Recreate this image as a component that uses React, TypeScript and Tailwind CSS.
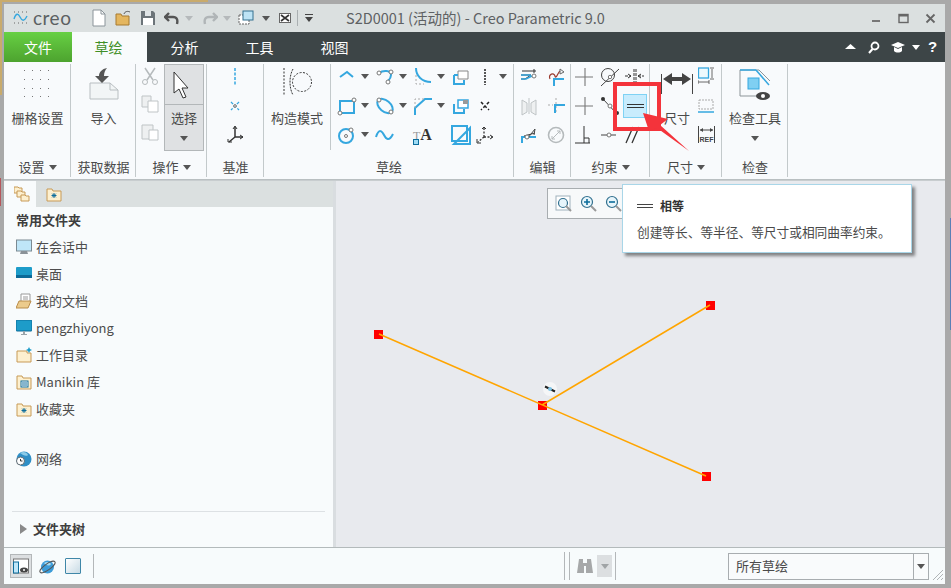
import { ReactNode } from "react";

const cjk = "font-['Microsoft_YaHei','Noto_Sans_CJK_SC','Noto_Sans',sans-serif]";
const BLUE = "#35a7df";

function Svg({ w = 20, h = 20, children }: { w?: number; h?: number; children: ReactNode }) {
  return (
    <svg width={w} height={h} viewBox={`0 0 ${w} ${h}`} fill="none" className="block shrink-0">
      {children}
    </svg>
  );
}

function DropArrow({ color = "#555" }: { color?: string }) {
  return (
    <svg width="8" height="5" viewBox="0 0 8 5" className="block shrink-0">
      <path d="M0 0h8L4 5z" fill={color} />
    </svg>
  );
}

function Dot({ x, y, fill = "#fff", r = 2 }: { x: number; y: number; fill?: string; r?: number }) {
  return <circle cx={x} cy={y} r={r} fill={fill} stroke="#777" strokeWidth="1" />;
}

function FolderIcon({ star }: { star?: boolean }) {
  return (
    <Svg w={16} h={16}>
      <path d="M1 3h5l1 2h8v10H1z" fill="#fdf0cf" stroke="#c79a56" />
      {star && <path d="M8 7v5M5.500 9.500h5M6.200 7.700l3.600 3.600M9.800 7.700l-3.600 3.600" stroke="#0d6d9c" strokeWidth="1" />}
    </Svg>
  );
}

function Group({ label, arrow, className, children }: { label: string; arrow?: boolean; className: string; children: ReactNode }) {
  return (
    <div className={`relative flex flex-col after:absolute after:right-0 after:top-[2px] after:bottom-[2px] after:w-px after:bg-[#c3c9cb] ${className}`}>
      <div className="h-[95px] flex">{children}</div>
      <div className="h-5 flex items-center justify-center gap-1 text-[13px] text-[#4a4a4a]">
        {label}
        {arrow && <DropArrow />}
      </div>
    </div>
  );
}

function SketchCell({ icon, arrow }: { icon: ReactNode; arrow?: boolean }) {
  return (
    <div className="flex items-center gap-1 pl-px">
      {icon}
      {arrow && <DropArrow />}
    </div>
  );
}

const sketchIcons: { icon: ReactNode; arrow?: boolean }[] = [
  { icon: <Svg><path d="M3 10l7-5 6 5" stroke={BLUE} strokeWidth="2" /></Svg>, arrow: true },
  { icon: <Svg><path d="M4 6c4-3 12-3 12 2 0 3-2 5-3 6" stroke={BLUE} strokeWidth="2" /><Dot x={4} y={6} /><Dot x={16} y={5} /><Dot x={13} y={15} /></Svg>, arrow: true },
  { icon: <Svg><path d="M3 1c0 8 6 14 15 14" stroke={BLUE} strokeWidth="2" /><path d="M3 8v9h8" stroke="#aaa" strokeDasharray="2 2" /></Svg>, arrow: true },
  { icon: <Svg><path d="M3 8v9h10v-4" stroke={BLUE} strokeWidth="2" /><path d="M7 12V4h10v8H7z" stroke="#888" fill="#fff" /><path d="M3 8h4" stroke={BLUE} strokeWidth="2" /></Svg> },
  { icon: <Svg><path d="M10 2v16" stroke="#222" strokeDasharray="2 1" strokeWidth="1.500" /></Svg>, arrow: true },
  { icon: <Svg><rect x="3" y="5" width="14" height="12" stroke={BLUE} strokeWidth="2" /><Dot x={17} y={4} /><Dot x={3} y={17} /></Svg>, arrow: true },
  { icon: <Svg><ellipse cx="10" cy="10" rx="9" ry="5.500" transform="rotate(40 10 10)" stroke={BLUE} strokeWidth="2" /><Dot x={4} y={4} /><Dot x={16} y={16} /></Svg>, arrow: true },
  { icon: <Svg><path d="M2 19v-7l10-9h7" stroke={BLUE} strokeWidth="2" /><path d="M2 12V3h10" stroke="#aaa" strokeDasharray="2 2" /></Svg>, arrow: true },
  { icon: <Svg><path d="M3 8v9h10v-4" stroke={BLUE} strokeWidth="2" /><path d="M7 12V4h10v8H7z" stroke={BLUE} strokeWidth="1.500" fill="#fff" /><rect x="12" y="4" width="5" height="4" fill="#999" /></Svg> },
  { icon: <Svg><path d="M6 6l8 8M14 6l-8 8" stroke="#222" strokeDasharray="3 2" strokeWidth="1.500" /></Svg> },
  { icon: <Svg><circle cx="9" cy="11" r="7" stroke={BLUE} strokeWidth="2" /><Dot x={9} y={11} r={1.500} /><Dot x={14} y={5} /></Svg>, arrow: true },
  { icon: <Svg><path d="M1 12c3-9 6-6 8-2s5 7 9-1" stroke={BLUE} strokeWidth="2" /></Svg> },
  {
    icon: (
      <div className="relative w-5 h-5 font-['Liberation_Serif',serif] leading-5 text-[#333] whitespace-nowrap">
        <span className="text-[12px] text-[#999]">T</span>
        <span className="text-[16px] font-bold">A</span>
        <span className="absolute left-0 bottom-0 w-[6px] h-[6px] bg-[#9fdcf5] border border-[#0d6d9c]" />
      </div>
    ),
  },
  { icon: <Svg><rect x="1" y="1" width="15" height="15" stroke={BLUE} strokeWidth="2" /><path d="M19 3L3 19h16z" stroke={BLUE} strokeWidth="2" /></Svg> },
  { icon: <Svg><path d="M9 3v9M9 12l-6 5M9 12h8" stroke="#333" strokeDasharray="2 1.500" strokeWidth="1.300" /><path d="M7 4l2-2 2 2M2 14v4h4M15 10l3 2-3 2" stroke="#333" /></Svg> },
];

const sideRows: { label: string; icon: ReactNode }[] = [
  { label: "在会话中", icon: <Svg w={16} h={16}><rect x="0.500" y="1" width="15" height="11" fill="#bfe6f8" stroke="#7b8a92" /><path d="M4 15h8l-1-3H5z" fill="#8a9298" /></Svg> },
  { label: "桌面", icon: <Svg w={16} h={16}><rect x="0" y="1" width="16" height="11" rx="1" fill="#1d9cc9" /><rect x="0" y="9" width="16" height="3" fill="#0b6a98" /></Svg> },
  { label: "我的文档", icon: <Svg w={16} h={16}><path d="M5 1h9v9H5z" fill="#fff" stroke="#999" /><path d="M7 4h5M7 6h5" stroke="#999" /><path d="M3 8h12l-3 7H0z" fill="#eccb8c" stroke="#b98d4b" /></Svg> },
  { label: "pengzhiyong", icon: <Svg w={16} h={16}><rect x="0" y="0" width="16" height="11" rx="1" fill="#1d9cc9" stroke="#0b6a98" /><path d="M7 11h2v3h2v1H5v-1h2z" fill="#9aa4aa" /></Svg> },
  { label: "工作目录", icon: <Svg w={16} h={16}><path d="M1 4h10v2h4v9H1z" fill="#fdf0cf" stroke="#c79a56" /><path d="M13 0l1 2 2 1-2 1-1 2-1-2-2-1 2-1z" fill="#1d9cc9" /></Svg> },
  { label: "Manikin 库", icon: <Svg w={16} h={16}><path d="M1 2h5l1 2h8v11H1z" fill="#fdf0cf" stroke="#c79a56" /><rect x="5" y="7" width="7" height="6" fill="#fff" stroke="#0d6d9c" /><path d="M6 9h5M6 11h5" stroke="#0d6d9c" /></Svg> },
  { label: "收藏夹", icon: <FolderIcon star /> },
];

function Sidebar() {
  return (
    <aside className="w-[332px] shrink-0 flex flex-col border-r-[3px] border-[#d9dde0]">
      <div className="h-[26px] flex bg-[#dbe0e0] shrink-0">
        <div className="w-[32px] bg-[#f8fbfc] flex items-center justify-center pl-1">
          <Svg w={16} h={16}>
            <path d="M0 1h4l1 1h3v5H0z" fill="#fdf0cf" stroke="#c79a56" />
            <path d="M3 5h4l1 1h3v5H3z" fill="#fdf0cf" stroke="#c79a56" />
            <path d="M7 9h4l1 1h3v5H7z" fill="#fdf0cf" stroke="#c79a56" />
          </Svg>
        </div>
        <div className="w-[32px] flex items-center justify-center pl-1">
          <FolderIcon star />
        </div>
      </div>
      <div className="flex-1 flex flex-col bg-[#f8fbfc] pt-px">
        <div className="h-6 pl-3 flex items-center text-[13px] font-bold text-[#3e3e3e]">常用文件夹</div>
        <div className="mt-px">
          {sideRows.map((r) => (
            <div key={r.label} className="h-[27px] pl-3 flex items-center gap-1 text-[13px] text-[#4d4d4d]">
              {r.icon}
              <span>{r.label}</span>
            </div>
          ))}
        </div>
        <div className="mt-[23px] h-[27px] pl-3 flex items-center gap-1 text-[13px] text-[#4d4d4d]">
          <Svg w={16} h={16}>
            <circle cx="8" cy="8" r="7.500" fill="#2f8fc6" />
            <path d="M4 2c3-2 7-1 8 2-2 2-5 0-8-2z" fill="#8ccbe8" />
            <circle cx="4.500" cy="10" r="4" fill="#fff" stroke="#5c6a72" />
            <path d="M4.500 8v2h2" stroke="#333" />
          </Svg>
          <span>网络</span>
        </div>
        <div className="flex-1" />
        <div className="mx-2 border-t border-[#dde1e4] h-[36px] pb-px flex items-center pl-2 gap-[6px] text-[13px] font-bold text-[#3e3e3e]">
          <svg width="7" height="10" viewBox="0 0 7 10"><path d="M0 0l7 5-7 5z" fill="#8a8a8a" /></svg>
          文件夹树
        </div>
      </div>
    </aside>
  );
}

function Canvas() {
  return (
    <main className="relative flex-1 bg-[#e8eaee]">
      <svg width="609" height="366" viewBox="336 181 609 366" className="absolute left-0 top-0">
        <rect x="374" y="330" width="9" height="9" fill="#f00" />
        <rect x="538" y="401" width="9" height="9" fill="#f00" />
        <rect x="706" y="301" width="9" height="9" fill="#f00" />
        <rect x="702" y="472" width="9" height="9" fill="#f00" />
        <path d="M379 334L706 476M710 305L542 405" stroke="#ffa500" strokeWidth="1.500" fill="none" />
        <circle cx="550" cy="389" r="7" fill="#f5f6f7" />
        <path d="M545 386.500l10 5" stroke="#222" strokeWidth="2" />
        <circle cx="550" cy="389" r="2" fill="#7fc4e6" />
      </svg>
      {/* in-graphics zoom bar */}
      <div className="absolute left-[211px] top-[7px] w-[90px] h-[31px] bg-[#f7f9fa] border border-[#a8adb0] flex items-center gap-[7px] pl-[7px]">
        <Svg w={18} h={18}>
          <rect x="1" y="1" width="14" height="14" fill="#fff" stroke="#9fb2bc" />
          <circle cx="8" cy="8" r="4.500" fill="#e7f5fb" stroke="#31708f" strokeWidth="1.200" />
          <path d="M11 11l5 5" stroke="#999" strokeWidth="2" />
        </Svg>
        <Svg w={18} h={18}>
          <circle cx="7" cy="7" r="5.500" fill="#e7f5fb" stroke="#31708f" strokeWidth="1.200" />
          <path d="M4 7h6M7 4v6" stroke="#0d6d9c" strokeWidth="1.600" />
          <path d="M11 11l5 5" stroke="#999" strokeWidth="2" />
        </Svg>
        <Svg w={18} h={18}>
          <circle cx="7" cy="7" r="5.500" fill="#e7f5fb" stroke="#31708f" strokeWidth="1.200" />
          <path d="M4 7h6" stroke="#0d6d9c" strokeWidth="1.600" />
          <path d="M11 11l5 5" stroke="#999" strokeWidth="2" />
        </Svg>
      </div>
    </main>
  );
}

export default function App() {
  return (
    <div className={`relative w-[951px] h-[588px] overflow-hidden bg-[#a9a9a9] pl-1 pt-1 pb-1 pr-[6px] ${cjk}`}>
      {/* desktop showing behind the window edge */}
      <div className="absolute left-0 top-0 w-[208px] h-[2px] bg-[#c9ab6c]" />
      <div className="absolute left-0 top-0 w-[2px] h-[95px] bg-[#c9ab6c]" />
      <div className="absolute left-0 top-[178px] w-px h-[28px] bg-[#b5575c]" />
      <div className="absolute right-0 top-[218px] w-px h-[112px] bg-[#5b7fb5]" />
      <div className="w-full h-full flex flex-col bg-[#f8fbfc]">
        {/* title bar */}
        <div className="h-[28px] shrink-0 bg-[#dbe0e0] flex items-center text-[#5c5f60]">
          <div className="flex items-center w-[87px] pl-[9px] gap-1">
            <Svg w={16} h={16}>
              <path d="M1 9c2-6 4-6 6-2s4 5 7-1" stroke={BLUE} strokeWidth="1.400" />
              <path d="M1 2h1M5 2h1M9 2h1M13 2h1M1 13h1M5 13h1M9 13h1M13 13h1" stroke="#666" />
            </Svg>
            <span className="font-['Lato','Noto_Sans',sans-serif] text-[19px] tracking-[0.5px] leading-none text-[#5c6163] -mt-[2px]">creo</span>
          </div>
          <div className="flex items-center">
            <Svg w={16} h={18}><path d="M2 1h8l4 4v12H2z" fill="#fff" stroke="#8b949a" /><path d="M10 1v4h4" stroke="#8b949a" /></Svg>
            <div className="ml-2">
              <Svg w={17} h={18}><path d="M1 5h5l1 2h7v9H1z" fill="#e4b65f" stroke="#a77a30" /><path d="M9 5c1-3 4-3 6-2" stroke="#555" /></Svg>
            </div>
            <div className="ml-2">
              <Svg w={16} h={16}><path d="M1 1h12l2 2v12H1z" fill="#6c7479" /><rect x="5" y="1" width="6" height="5" fill="#dfe4e6" /><rect x="3" y="8" width="10" height="7" fill="#fff" /></Svg>
            </div>
            <div className="ml-2 flex items-center gap-[5px]">
              <Svg w={16} h={14}><path d="M5 2L1 6l4 4M1 6h8c4 0 5 3 4 7" stroke="#555" strokeWidth="2.400" /></Svg>
              <DropArrow color="#b5b9bb" />
            </div>
            <div className="ml-[9px] flex items-center gap-[5px]">
              <Svg w={16} h={14}><path d="M11 2l4 4-4 4M15 6H7c-4 0-5 3-4 7" stroke="#b0b5b7" strokeWidth="2.400" /></Svg>
              <DropArrow color="#b5b9bb" />
            </div>
            <div className="ml-[7px] flex items-center gap-2">
              <Svg w={16} h={16}><rect x="1" y="5" width="10" height="9" fill="#fff" stroke="#666" strokeDasharray="2 1" /><rect x="5" y="1" width="10" height="9" fill="#bde3f5" stroke="#35708f" /></Svg>
              <DropArrow />
            </div>
            <div className="ml-[9px]">
              <Svg w={12} h={12}><rect x="0.500" y="1.500" width="11" height="9" fill="#fff" stroke="#666" /><path d="M2 3l8 6M10 3l-8 6" stroke="#333" strokeWidth="1.600" /></Svg>
            </div>
            <div className="ml-[6px] h-[16px] border-l border-[#aab0b2] pl-[7px] flex items-center">
              <div>
                <div className="w-[8px] border-t border-[#444] mb-[2px]" />
                <DropArrow color="#444" />
              </div>
            </div>
          </div>
          <div className="ml-[33px] text-[14.500px] text-[#5e6163] whitespace-nowrap">S2D0001 (活动的) - Creo Parametric 9.0</div>
          <div className="flex-1" />
          <div className="flex items-center gap-[16px] pr-[9px]">
            <Svg w={11} h={11}><path d="M1 8h8" stroke="#777" strokeWidth="2" /></Svg>
            <Svg w={11} h={11}><rect x="1" y="1.500" width="9" height="8" stroke="#666" strokeWidth="1.400" /><path d="M1 2.500h9" stroke="#666" strokeWidth="2" /></Svg>
            <Svg w={11} h={11}><path d="M1.500 1.500l8 8M9.500 1.500l-8 8" stroke="#666" strokeWidth="1.800" /></Svg>
          </div>
        </div>
        {/* tabs */}
        <div className="h-[30px] shrink-0 bg-[#3d4547] flex text-[14px] text-white">
          <div className="w-[68px] flex items-center justify-center bg-gradient-to-b from-[#67d043] to-[#4da32f]">文件</div>
          <div className="w-[75px] pr-[2px] flex items-center justify-center bg-[#f8fbfc] text-[#3f8f26]">草绘</div>
          <div className="w-[75px] flex items-center justify-center">分析</div>
          <div className="w-[75px] flex items-center justify-center">工具</div>
          <div className="w-[75px] flex items-center justify-center">视图</div>
          <div className="flex-1" />
          <div className="flex items-center pr-[7px]">
            <Svg w={11} h={11}><path d="M0 7l5.500-5L11 7z" fill="#fff" /></Svg>
            <div className="ml-3"><Svg w={12} h={13}><circle cx="7" cy="5" r="3.500" stroke="#fff" strokeWidth="1.800" /><path d="M4.500 8L1 12" stroke="#fff" strokeWidth="2" /></Svg></div>
            <div className="ml-[11px]"><Svg w={14} h={13}><path d="M0 4l7-3 7 3-7 3z" fill="#fff" /><path d="M3 6v4c2 2 6 2 8 0V6l-4 2z" fill="#fff" /></Svg></div>
            <div className="ml-[7px]"><DropArrow color="#fff" /></div>
            <span className="ml-[7px] w-[11px] text-[15px] text-center font-bold font-['Liberation_Sans',sans-serif]">?</span>
          </div>
        </div>
        {/* ribbon */}
        <div className="relative h-[118px] shrink-0 bg-[#f8fafc] flex border-b border-[#b9bfc1]">
          <Group label="设置" arrow className="w-[67px]">
            <div className="w-full flex flex-col items-center pt-[6px]">
              <Svg w={30} h={30}>
                {[2, 11, 20, 28].flatMap((y) => [1, 9, 17, 25].map((x) => <rect key={`${x}-${y}`} x={x} y={y} width="1" height="1" fill="#777" />))}
              </Svg>
              <div className="mt-[10px] text-[13px] text-[#4a4a4a] whitespace-nowrap">栅格设置</div>
            </div>
          </Group>
          <Group label="获取数据" className="w-[65px]">
            <div className="w-full flex flex-col items-center pt-[5px]">
              <Svg w={30} h={33}>
                <path d="M1 16h20l8 7v9H1z" fill="#f2f5f6" stroke="#b8bec1" />
                <path d="M21 16v7h8" stroke="#b8bec1" />
                <path d="M18 1c-5 1-8 4-8 8H6l7 7 7-7h-5c0-3 1-6 3-8z" fill="#555" />
              </Svg>
              <div className="mt-[8px] text-[13px] text-[#4a4a4a]">导入</div>
            </div>
          </Group>
          <Group label="操作" arrow className="w-[71px]">
            <div className="w-[28px] flex flex-col items-center pt-[4px] gap-[10px]">
              <Svg w={18} h={19}><path d="M4 2l8 12M14 2L6 14" stroke="#b5babc" strokeWidth="1.500" /><circle cx="4" cy="16" r="2.500" stroke="#b5babc" /><circle cx="14" cy="16" r="2.500" stroke="#b5babc" /></Svg>
              <Svg w={18} h={18}><path d="M1 1h9v11H1z" fill="#eef0f1" stroke="#bfc4c6" /><path d="M7 6h10v11H7z" fill="#fff" stroke="#bfc4c6" /></Svg>
              <Svg w={18} h={18}><path d="M1 2h11v14H1z" fill="#eef0f1" stroke="#bfc4c6" /><path d="M8 7h9v10H8z" fill="#fff" stroke="#bfc4c6" /></Svg>
            </div>
            <div className="w-[40px] h-[87px] mt-[2px] bg-[#dfe1e3] border border-[#b3b7b9] flex flex-col items-center">
              <div className="h-[40px] w-full border-b border-[#b3b7b9] flex items-center justify-center pr-[6px]">
                <svg width="16" height="28" viewBox="0 0 16 28" fill="none"><path d="M1 1v21l5-4 4 9 3-1-4-9h6z" fill="#fff" stroke="#333" strokeWidth="1" /></svg>
              </div>
              <div className="mt-[3px] text-[13px] text-[#4a4a4a]">选择</div>
              <div className="mt-[8px]"><DropArrow /></div>
            </div>
          </Group>
          <Group label="基准" className="w-[57px]">
            <div className="w-full flex flex-col items-center gap-[9px] pt-[4px] pr-[2px]">
              <Svg w={20} h={20}><path d="M10 2v17" stroke={BLUE} strokeWidth="1.500" strokeDasharray="3 1.500" /></Svg>
              <Svg w={20} h={20}><path d="M6 7l8 8M14 7l-8 8" stroke={BLUE} strokeWidth="1.300" strokeDasharray="3 1.500" /><circle cx="10" cy="11" r="1.300" fill="#fff" stroke="#666" /></Svg>
              <Svg w={20} h={20}><path d="M10 3v10M10 13l-6 5M10 13h8" stroke="#333" strokeWidth="1.500" /><path d="M8 5l2-3 2 3M3 15v3h4M15 11l3 2-3 2" stroke="#333" /></Svg>
            </div>
          </Group>
          <Group label="草绘" className="w-[250px]">
            <div className="w-[67px] border-r border-[#c3c9cb] mt-[2px] h-[86px] flex flex-col items-center pt-[2px]">
              <svg width="30" height="32" viewBox="0 0 30 32" fill="none">
                <path d="M2 2v28" stroke="#333" strokeDasharray="2 1.500" />
                <path d="M11 3c-4 7-4 19 0 26" stroke="#333" strokeDasharray="2 1" />
                <circle cx="20" cy="16" r="9.500" stroke="#333" strokeDasharray="2 1.500" />
              </svg>
              <div className="mt-[10px] text-[13px] text-[#4a4a4a] whitespace-nowrap">构造模式</div>
            </div>
            <div className="grid grid-cols-[38px_38px_38px_24px_38px] grid-rows-[29px_29px_29px] items-center pl-[5px] h-[87px]">
              {sketchIcons.map((c, i) => (
                <SketchCell key={i} icon={c.icon} arrow={c.arrow} />
              ))}
            </div>
          </Group>
          <Group label="编辑" className="w-[57px]">
            <div className="grid grid-cols-[27px_22px] grid-rows-[29px_29px_29px] items-center pl-[5px] h-[87px]">
              <Svg><path d="M3 4h14M2 8h10l-6 4H2M15 2v4" stroke="#333" /><path d="M2 8h10M2 12h5l6-3" stroke={BLUE} strokeWidth="1.500" /><Dot x={15} y={9} /></Svg>
              <Svg><path d="M4 12c-2-5 4-7 5-3s3-4 5-5" stroke="#9b3a2e" strokeWidth="1.200" /><path d="M8 19v-7h10" stroke={BLUE} strokeWidth="2" /><path d="M14 2l4 3-4 2z" stroke="#666" /></Svg>
              <Svg><path d="M3 4l5 3v9l-5 3zM17 4l-5 3v9l5 3z" fill="#eef0f1" stroke="#bfc4c6" /><path d="M10 2v16" stroke="#bfc4c6" /></Svg>
              <Svg><path d="M10 2v14M2 9h5" stroke="#aaa" strokeDasharray="2 2" /><path d="M9 17v-8h10" stroke={BLUE} strokeWidth="2" /></Svg>
              <Svg><path d="M3 18v-6h14" stroke={BLUE} strokeWidth="2" /><path d="M5 11l11-3M8 14l8-10-1 6" stroke="#444" /><Dot x={8} y={12} /></Svg>
              <Svg><circle cx="10" cy="10" r="7.500" stroke="#b5babc" strokeWidth="1.600" /><path d="M6 14l8-8M11 6h3v3M6 11v3h3" stroke="#b5babc" /></Svg>
            </div>
          </Group>
          <Group label="约束" arrow className="w-[79px]">
            <div className="grid grid-cols-[25px_25px_24px] grid-rows-[29px_29px_29px] items-center pl-[3px] h-[87px]">
              <Svg w={22} h={22}><path d="M11 2v18M1 11h18" stroke="#777" strokeWidth="1.100" /></Svg>
              <Svg w={22} h={22}><circle cx="9" cy="9" r="6.500" stroke="#444" /><path d="M2 20L20 3" stroke="#444" /><circle cx="11" cy="11" r="1.700" fill="#fff" stroke="#777" /></Svg>
              <Svg w={22} h={22}><path d="M1 10h6M14 10h6M10 3v14M12 3v14" stroke="#333" strokeDasharray="3 1" /><path d="M4 8l3 2-3 2M17 8l-3 2 3 2" stroke="#333" /></Svg>
              <Svg w={22} h={22}><path d="M11 2v18M1 11h18" stroke="#777" strokeWidth="1.100" /></Svg>
              <Svg w={22} h={22}><path d="M4 4l14 15" stroke="#444" /><circle cx="4" cy="4" r="2" fill="#333" /><circle cx="11" cy="11" r="2" fill="#fff" stroke="#777" /><circle cx="18" cy="18" r="2" fill="#333" /></Svg>
              <div className="w-[24px] h-[24px] -ml-px bg-[#c8ecfd] border border-[#7fd2f4] flex flex-col items-center justify-center gap-[2px]">
                <div className="w-[17px] border-t border-[#333]" />
                <div className="w-[17px] border-t border-[#333]" />
              </div>
              <Svg w={22} h={22}><path d="M10 2v17M1 19h15M10 14h5v5" stroke="#333" /></Svg>
              <Svg w={22} h={22}><path d="M2 11h15" stroke="#444" /><circle cx="10" cy="11" r="2" fill="#fff" stroke="#777" /></Svg>
              <Svg w={22} h={22}><path d="M9 3L2 19M15 3L8 19" stroke="#333" strokeWidth="1.300" /></Svg>
            </div>
          </Group>
          <Group label="尺寸" arrow className="w-[72px]">
            <div className="w-[47px] pl-[7px] flex flex-col items-center pt-[11px]">
              <svg width="32" height="21" viewBox="0 0 32 21" fill="none" className="block shrink-0">
                <path d="M.500 1v20M31.500 1v20" stroke="#444" />
                <path d="M2 6l9-6v4h10V0l9 6-9 6V8H11v4z" fill="#444" />
              </svg>
              <div className="mt-[14px] text-[13px] text-[#4a4a4a]">尺寸</div>
            </div>
            <div className="flex flex-col items-center gap-[9px] pt-[5px] pl-px">
              <Svg w={17} h={20}><rect x="0.500" y="1" width="10" height="10" stroke={BLUE} strokeWidth="1.300" fill="#eef9fd" /><path d="M14 2v9M0 15h11M0 13v4M11 13v4M12 1h4M12 12h4" stroke="#444" strokeWidth="0.800" /></Svg>
              <Svg w={17} h={20}><rect x="1" y="4" width="14" height="9" stroke="#aaa" strokeDasharray="2 1" /><path d="M0 16h16" stroke={BLUE} strokeWidth="1.500" /></Svg>
              <svg width="17" height="20" viewBox="0 0 17 20" fill="none" className="block">
                <path d="M.500 1v17M16.500 1v17M2 5h13" stroke="#444" />
                <path d="M2 5l3-2v4zM15 5l-3-2v4z" fill="#444" />
                <text x="8.500" y="16.500" textAnchor="middle" fontSize="7" fontWeight="bold" fill="#444" fontFamily="Liberation Sans, sans-serif">REF</text>
              </svg>
            </div>
          </Group>
          <Group label="检查" className="w-[66px]">
            <div className="w-full flex flex-col items-center pt-[7px]">
              <Svg w={32} h={32}>
                <path d="M1 1h19l11 11M1 1v26h18" stroke="#8d9599" />
                <path d="M1 1h16" stroke={BLUE} strokeWidth="1.500" />
                <path d="M17 1l13 15" stroke={BLUE} strokeWidth="1.500" />
                <rect x="9" y="9" width="11" height="11" fill="#7fcff2" stroke={BLUE} />
                <ellipse cx="24" cy="27" rx="7" ry="4" fill="#444" />
                <circle cx="24" cy="27" r="2" fill="#fff" />
              </Svg>
              <div className="mt-[7px] text-[13px] text-[#4a4a4a] whitespace-nowrap">检查工具</div>
              <div className="mt-2"><DropArrow /></div>
            </div>
          </Group>
          {/* red callout drawn over the ribbon */}
          <div className="absolute left-[609px] top-[20px] w-[48px] h-[49px] border-[4px] border-[#f4333b]" />
          <svg width="60" height="60" viewBox="0 0 60 60" className="absolute left-[634px] top-[46px]">
            <path d="M5 5L30 11L22 17L51 43L19 20L11 23Z" fill="#f4333b" />
          </svg>
        </div>
        {/* body */}
        <div className="relative flex-1 min-h-0 flex border-t border-[#c8cdcf]">
          <Sidebar />
          <Canvas />
          {/* tooltip */}
          <div className="absolute left-[618px] top-[3px] w-[290px] h-[69px] bg-white border border-[#a9d6e8] shadow-[3px_3px_3px_rgba(0,0,0,0.45)] pl-[14px] pt-[12px]">
            <div className="flex items-center gap-[7px] text-[12px] font-bold text-[#333]">
              <div className="w-[16px]">
                <div className="border-t border-[#444] mb-[2px]" />
                <div className="border-t border-[#444]" />
              </div>
              相等
            </div>
            <div className="mt-[7px] text-[12.700px] text-[#4a4a4a] whitespace-nowrap">创建等长、等半径、等尺寸或相同曲率约束。</div>
          </div>
        </div>
        {/* status bar */}
        <div className="h-[37px] shrink-0 bg-[#f7fbfc] border-t border-[#b3babb] flex items-center text-[13px] text-[#4a4a4a]">
          <div className="ml-[6px] w-[22px] h-[24px] bg-[#dcdfe1] border border-[#b3b7b9] flex items-center justify-center">
            <Svg w={16} h={16}><rect x="0.500" y="1" width="15" height="14" fill="#fff" stroke="#777" /><rect x="0.500" y="4" width="5" height="11" fill="#bfe6f8" stroke="#0d6d9c" /><ellipse cx="11" cy="12" rx="4" ry="2.500" fill="#444" /><circle cx="11" cy="12" r="1" fill="#fff" /></Svg>
          </div>
          <div className="ml-[7px]">
            <Svg w={17} h={17}><circle cx="8.500" cy="9" r="6.500" fill="#3d9cd8" /><path d="M5 5c3-2 6-1 7 1-2 3-5 1-7-1z" fill="#a6dbf3" /><ellipse cx="8.500" cy="9" rx="9" ry="3" transform="rotate(-35 8.500 9)" stroke="#555" /></Svg>
          </div>
          <div className="ml-[9px] w-[16px] h-[16px] rounded-[1px] border border-[#3f87a8] bg-gradient-to-br from-white to-[#c8dbe5]" />
          <div className="ml-[12px] h-[24px] border-l border-[#b3b7b9]" />
          <div className="flex-1" />
          <div className="h-[28px] border-l border-[#b3b7b9] w-[5px]" />
          <div className="h-[28px] border-l border-[#b3b7b9] w-[3px]" />
          <div className="h-[28px] w-[44px] border-r border-[#b3b7b9] flex items-center pl-[4px] gap-[3px]">
            <Svg w={18} h={18}><path d="M3 2h4v4h4V2h4l2 14h-7V9H8v7H1z" fill="#a6a8a9" /></Svg>
            <div className="w-[15px] h-[22px] bg-[#dcdfe1] flex items-center justify-center"><DropArrow color="#a0a4a6" /></div>
          </div>
          <div className="w-[112px]" />
          <div className="w-[201px] h-[27px] border border-[#a8adb0] flex items-center pl-[7px] bg-[#f9fbfc]">
            <span className="flex-1">所有草绘</span>
            <div className="w-[15px] h-full border-l border-[#a8adb0] flex items-center justify-center"><DropArrow /></div>
          </div>
          <div className="w-[16px] h-full flex items-end justify-end pr-px pb-[3px]">
            <svg width="12" height="12" viewBox="0 0 12 12"><path d="M1 11l10-10M5 11l6-6M9 11l2-2" stroke="#b0b5b7" /></svg>
          </div>
        </div>
      </div>
    </div>
  );
}
